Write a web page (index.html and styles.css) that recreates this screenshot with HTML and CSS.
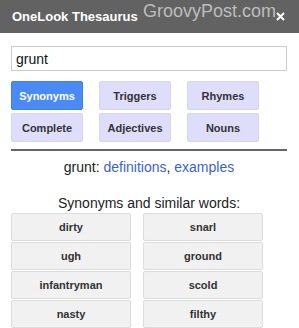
FILE: index.html
```html
<!DOCTYPE html>
<html>
<head>
  <title>OneLook Thesaurus</title>
  <link rel="stylesheet" href="styles.css">
</head>
<body>
  <div class="header">
    <span class="title">OneLook Thesaurus</span>
    <span class="watermark">GroovyPost.com</span>
    <svg class="close" width="9" height="9" viewBox="0 0 9 9">
      <path d="M1 1 L8 8 M8 1 L1 8" stroke="#fff" stroke-width="2"/>
    </svg>
  </div>
  <div class="container">
    <input class="search" type="text" value="grunt">
    <div class="modes">
      <button class="mode active">Synonyms</button>
      <button class="mode">Triggers</button>
      <button class="mode">Rhymes</button>
      <button class="mode">Complete</button>
      <button class="mode">Adjectives</button>
      <button class="mode">Nouns</button>
    </div>
    <hr class="rule">
    <div class="links">grunt: <a href="#">definitions</a>, <a href="#">examples</a></div>
    <div class="caption">Synonyms and similar words:</div>
    <div class="results">
      <div class="word">dirty</div>
      <div class="word">snarl</div>
      <div class="word">ugh</div>
      <div class="word">ground</div>
      <div class="word">infantryman</div>
      <div class="word">scold</div>
      <div class="word">nasty</div>
      <div class="word">filthy</div>
    </div>
  </div>
</body>
</html>
```
FILE: styles.css
```css
body {
  margin: 0;
  font-family: "Liberation Sans", Arial, sans-serif;
  background-color: #fff;
  color: #222;
}
.header {
  height: 33px;
  background-color: #626262;
  display: flex;
  align-items: center;
  padding: 0 12px;
  box-sizing: border-box;
  position: relative;
}
.title {
  color: #fff;
  font-weight: bold;
  font-size: 13px;
}
.watermark {
  position: absolute;
  left: 143px;
  top: 1px;
  color: #bdbdbd;
  font-size: 18px;
}
.close {
  position: absolute;
  left: 276px;
  top: 12px;
}
.container {
  padding: 13px 11px 0 11px;
}
.search {
  display: block;
  width: 276px;
  height: 25px;
  box-sizing: border-box;
  border: 1px solid #ccc;
  padding: 0 4px;
  font-family: "Liberation Sans", Arial, sans-serif;
  font-size: 14px;
  color: #111;
  margin: 0;
}
.modes {
  display: grid;
  grid-template-columns: repeat(3, 72px);
  column-gap: 16px;
  row-gap: 3px;
  margin-top: 10px;
}
.mode {
  height: 29px;
  border: 1px solid #d6d6ee;
  border-radius: 2px;
  background-color: #dedefa;
  color: #333;
  font-family: "Liberation Sans", Arial, sans-serif;
  font-weight: bold;
  font-size: 11px;
  padding: 0;
}
.mode.active {
  background-color: #4a8af4;
  border-color: #3f7fe6;
  color: #fff;
}
.rule {
  width: 276px;
  margin: 7px 0 0 0;
  border: 0;
  border-top: 2px solid #666;
}
.links {
  text-align: center;
  font-size: 14px;
  margin-top: 8px;
  width: 276px;
}
.links a {
  color: #3b5fd9;
  text-decoration: none;
}
.caption {
  text-align: center;
  font-size: 14px;
  margin-top: 20px;
  width: 276px;
}
.results {
  display: grid;
  grid-template-columns: repeat(2, 120px);
  column-gap: 12px;
  row-gap: 1px;
  margin-top: 2px;
}
.word {
  height: 28px;
  box-sizing: border-box;
  border: 1px solid #dcdcdc;
  border-radius: 2px;
  background-color: #f1f1f1;
  display: flex;
  justify-content: center;
  align-items: center;
  font-weight: bold;
  font-size: 11px;
  color: #333;
}
```
